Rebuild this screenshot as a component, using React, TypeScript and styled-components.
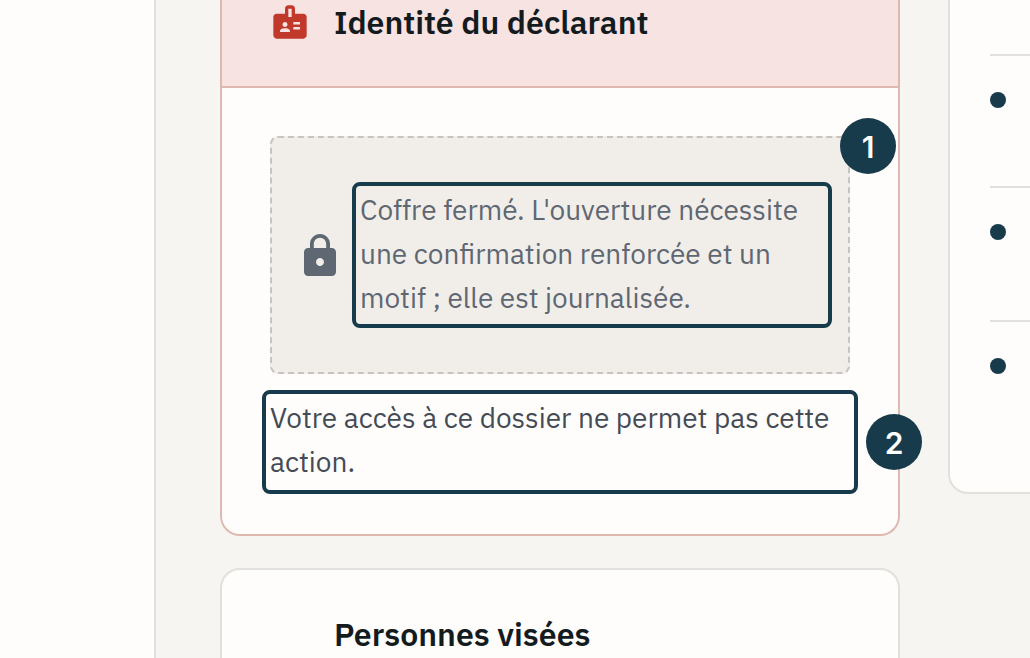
import React from "react";
import styled, { createGlobalStyle, css } from "styled-components";
import { MdBadge, MdLock } from "react-icons/md";

const sans = '"IBM Plex Sans", "Noto Sans", sans-serif';
const navy = "#183b4b";
const paper = "#fefdfc";
const line = "#e1e0dc";

const GlobalStyle = createGlobalStyle`
  * { box-sizing: border-box; }
  body {
    margin: 0;
    background: #f6f5f2;
    font-family: ${sans};
    overflow: hidden;
  }
`;

const Page = styled.div`
  display: grid;
  grid-template-columns: 156px minmax(0, 1fr) 82px;
  height: 100vh;
  overflow: hidden;
`;

const Sidebar = styled.nav`
  background: ${paper};
  border-right: 2px solid ${line};
`;

const Main = styled.main`
  display: flex;
  flex-direction: column;
  gap: 32px;
  padding: 0 48px 0 64px;
`;

const Card = styled.section<{ $sealed?: boolean }>`
  flex-shrink: 0;
  background: ${paper};
  border: 2px solid ${(p) => (p.$sealed ? "#dfb8b0" : line)};
  border-radius: 20px;
  ${(p) =>
    p.$sealed &&
    css`
      border-top: 0;
      border-top-left-radius: 0;
      border-top-right-radius: 0;
    `}
`;

const CardHeader = styled.header<{ $sealed?: boolean }>`
  display: flex;
  align-items: center;
  gap: 24px;
  padding: ${(p) => (p.$sealed ? "0 48px 42px" : "42px 48px")};
  background: ${(p) => (p.$sealed ? "#f7e3e1" : "transparent")};
  border-bottom: ${(p) => (p.$sealed ? "2px solid #dfb8b0" : "0")};
`;

const IconSlot = styled.span`
  display: flex;
  width: 40px;
  height: 44px;
  align-items: center;
  color: #c0392b;
`;

const Title = styled.h2`
  margin: 0;
  font-size: 32px;
  font-weight: 600;
  line-height: 44px;
  color: #141b1f;
  white-space: nowrap;
`;

const CardBody = styled.div`
  display: flex;
  flex-direction: column;
  gap: 16px;
  padding: 48px 48px 40px;
`;

const Vault = styled.div`
  position: relative;
  display: flex;
  align-items: center;
  gap: 8px;
  padding: 44px 16px 44px 24px;
  background: #f1eeea;
  border: 2px dashed #c6c4be;
  border-radius: 8px;
  color: #5f6772;
`;

const LockIcon = styled(MdLock)`
  flex-shrink: 0;
  margin-top: 2px;
`;

const Marked = styled.div<{ $wide?: boolean }>`
  position: relative;
  flex: 1;
  padding: ${(p) => (p.$wide ? "2px 4px 6px" : "2px 4px 4px")};
  margin: ${(p) => (p.$wide ? "0 -8px" : "0")};
  border: 4px solid ${navy};
  border-radius: 8px;
  color: ${(p) => (p.$wide ? "#454b55" : "inherit")};
`;

const Text = styled.p`
  margin: 0;
  font-size: 28px;
  line-height: 44px;
`;

const Marker = styled.span<{ $top: number; $right: number }>`
  position: absolute;
  top: ${(p) => p.$top}px;
  right: ${(p) => p.$right}px;
  width: 56px;
  height: 56px;
  padding-top: 1px;
  border-radius: 50%;
  background: ${navy};
  color: #fff;
  font: 600 30px/56px Inter, sans-serif;
  text-align: center;
`;

const Aside = styled.aside`
  align-self: start;
  padding: 0 0 40px 40px;
  background: ${paper};
  border: 2px solid ${line};
  border-width: 0 0 2px 2px;
  border-bottom-left-radius: 20px;
`;

const Steps = styled.ul`
  margin: 0;
  padding: 0;
  list-style: none;
`;

const Step = styled.li<{ $height: number }>`
  min-height: ${(p) => p.$height}px;
  padding-top: 36px;
  border-bottom: 2px solid ${line};
  &:last-child {
    border-bottom: 0;
  }
`;

const Dot = styled.span`
  display: block;
  width: 16px;
  height: 16px;
  border-radius: 50%;
  background: ${navy};
`;

export default function App() {
  return (
    <>
      <GlobalStyle />
      <Page>
        <Sidebar />
        <Main>
          <Card $sealed>
            <CardHeader $sealed>
              <IconSlot>
                <MdBadge size={40} />
              </IconSlot>
              <Title>Identité du déclarant</Title>
            </CardHeader>
            <CardBody>
              <Vault>
                <LockIcon size={48} />
                <Marked>
                  <Text>
                    Coffre fermé. L'ouverture nécessite une confirmation renforcée et un motif ; elle est
                    journalisée.
                  </Text>
                </Marked>
                <Marker $top={-20} $right={-48}>1</Marker>
              </Vault>
              <Marked $wide>
                <Text>Votre accès à ce dossier ne permet pas cette action.</Text>
                <Marker $top={20} $right={-68}>2</Marker>
              </Marked>
            </CardBody>
          </Card>
          <Card>
            <CardHeader>
              <IconSlot />
              <Title>Personnes visées</Title>
            </CardHeader>
          </Card>
        </Main>
        <Aside>
          <Steps>
            <Step $height={56} />
            <Step $height={132}><Dot /></Step>
            <Step $height={134}><Dot /></Step>
            <Step $height={130}><Dot /></Step>
          </Steps>
        </Aside>
      </Page>
    </>
  );
}
